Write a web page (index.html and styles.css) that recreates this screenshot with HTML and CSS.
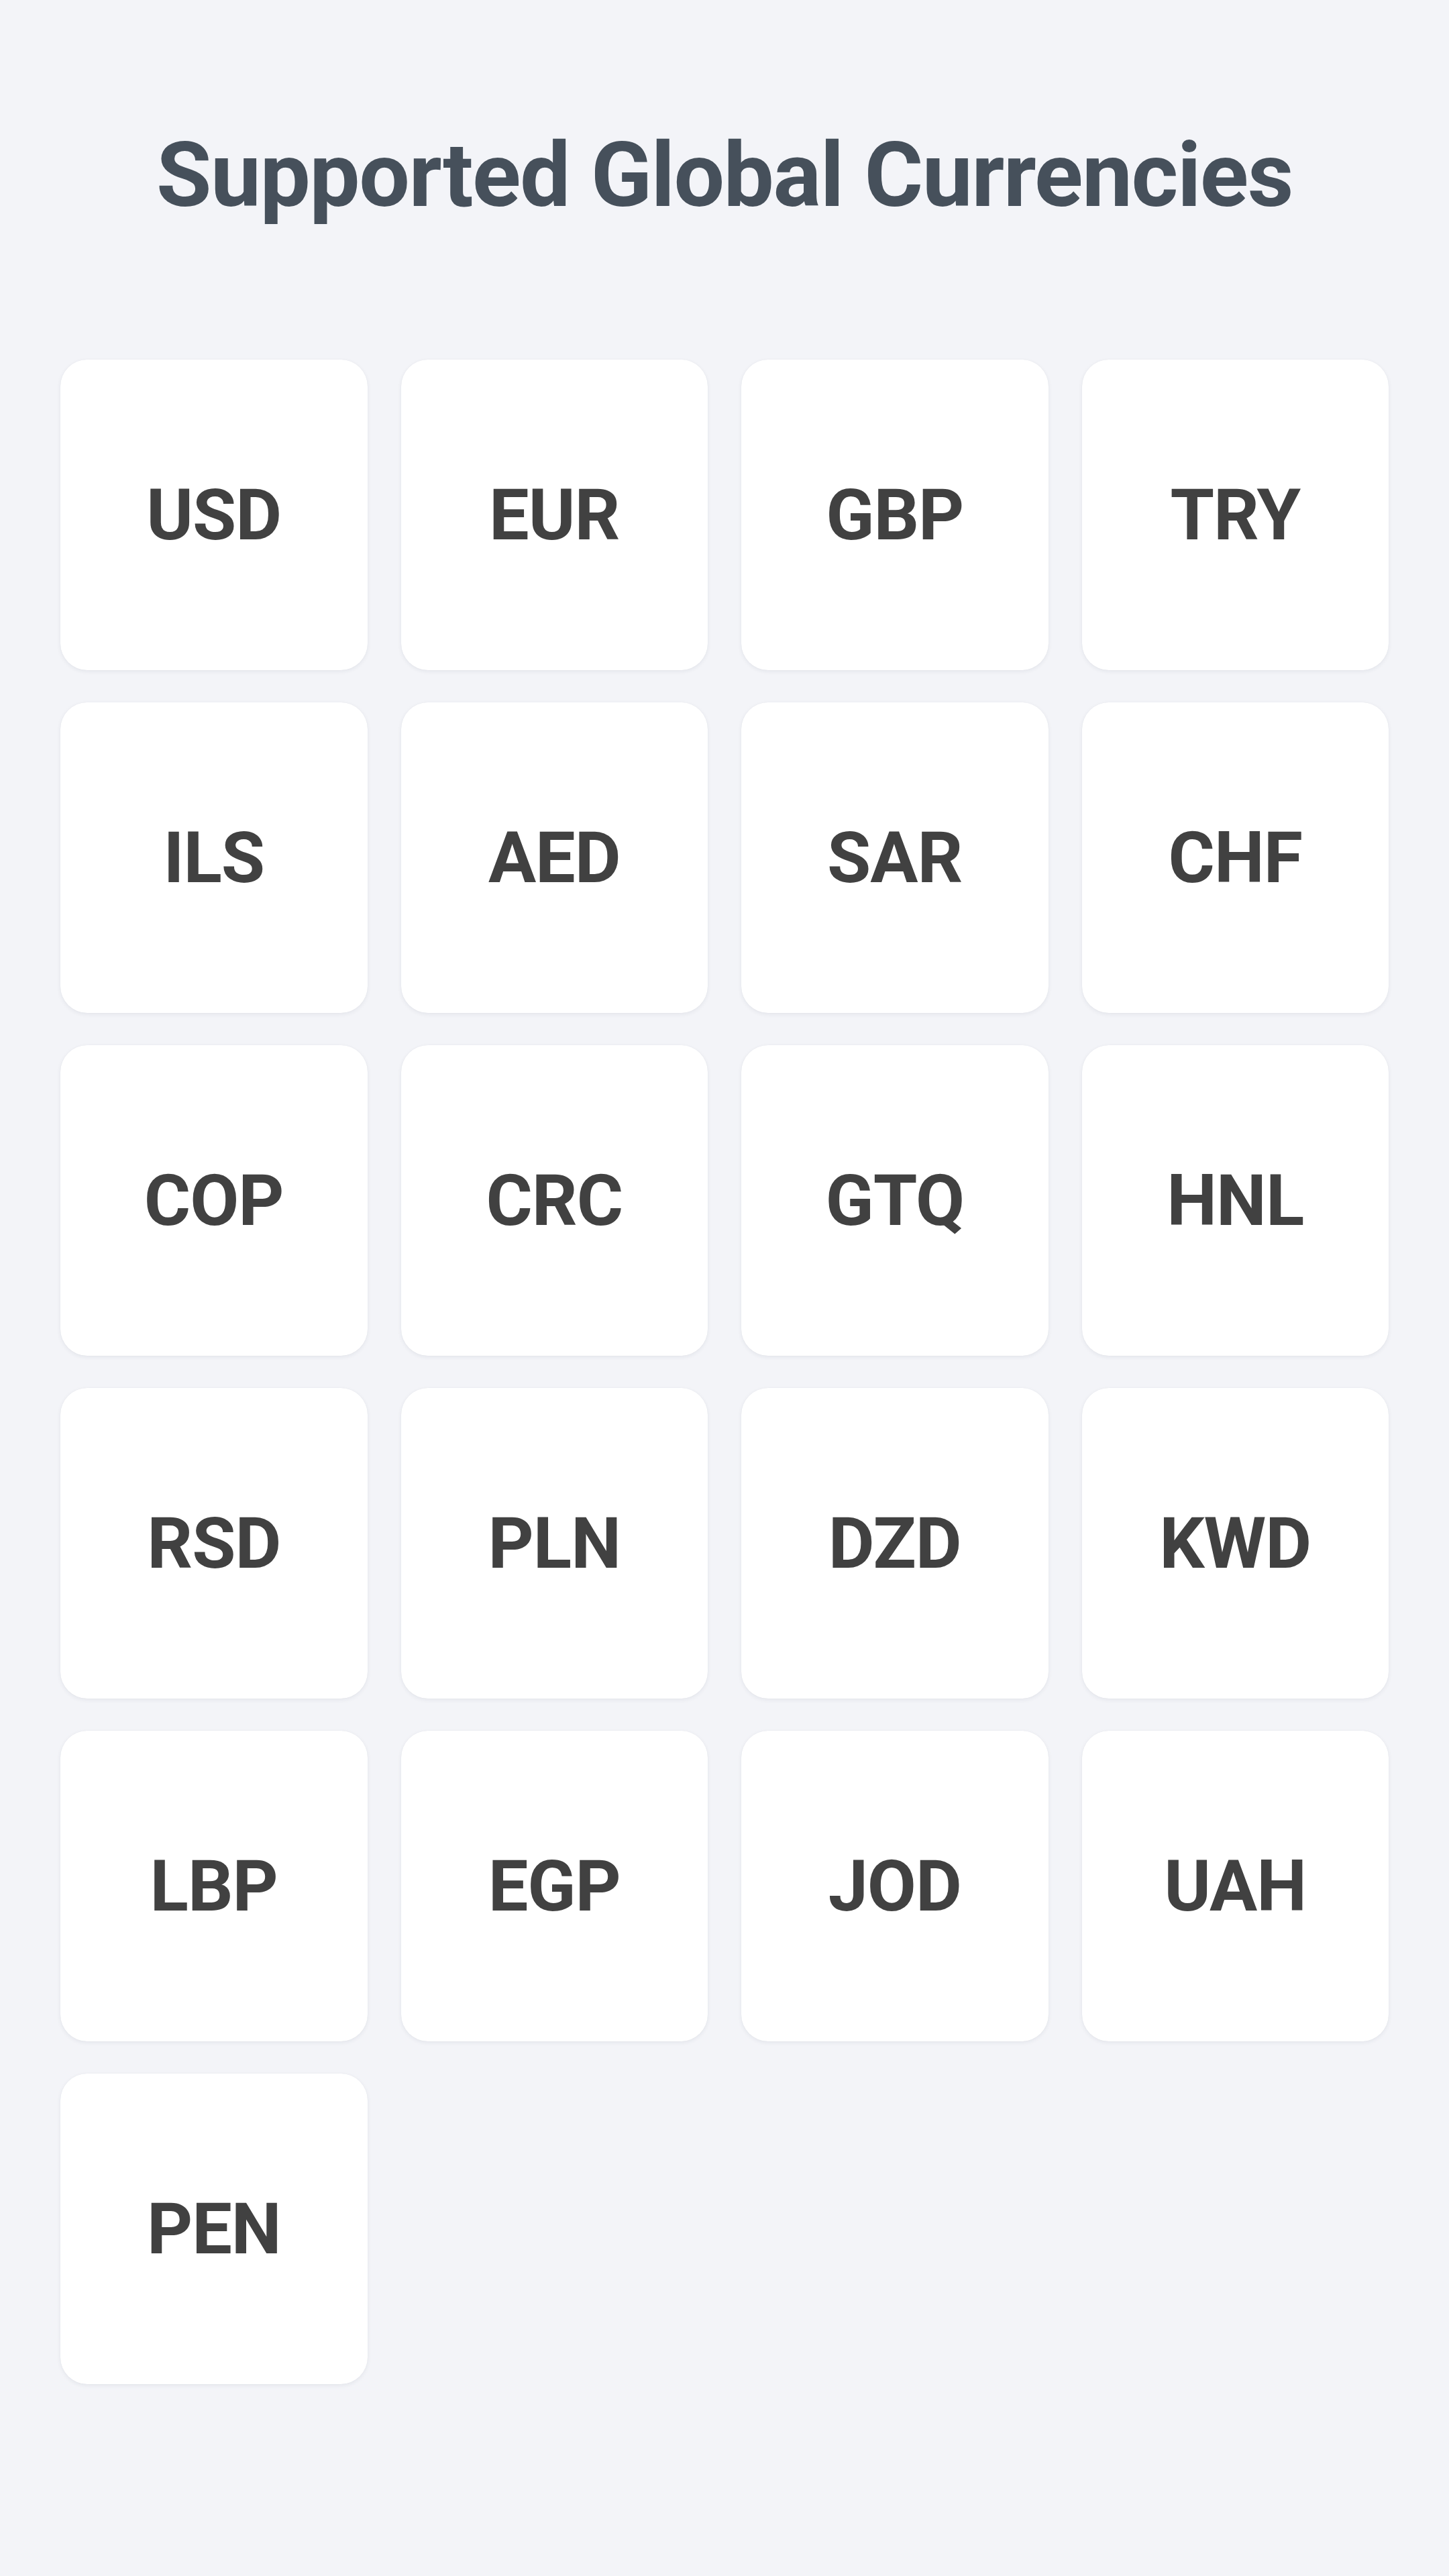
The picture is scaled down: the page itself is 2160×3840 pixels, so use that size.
FILE: index.html
```html
<!DOCTYPE html>
<html lang="en">
<head>
<meta charset="utf-8">
<title>Supported Global Currencies</title>
<link rel="stylesheet" href="styles.css">
</head>
<body>
<main class="page">
  <h1 class="title">Supported Global Currencies</h1>
  <div class="grid">
    <div class="card">USD</div>
    <div class="card">EUR</div>
    <div class="card">GBP</div>
    <div class="card">TRY</div>
    <div class="card">ILS</div>
    <div class="card">AED</div>
    <div class="card">SAR</div>
    <div class="card">CHF</div>
    <div class="card">COP</div>
    <div class="card">CRC</div>
    <div class="card">GTQ</div>
    <div class="card">HNL</div>
    <div class="card">RSD</div>
    <div class="card">PLN</div>
    <div class="card">DZD</div>
    <div class="card">KWD</div>
    <div class="card">LBP</div>
    <div class="card">EGP</div>
    <div class="card">JOD</div>
    <div class="card">UAH</div>
    <div class="card">PEN</div>
  </div>
</main>
</body>
</html>
```

FILE: styles.css
```css
html, body {
  margin: 0;
  padding: 0;
}
body {
  background: #f3f4f8;
  font-family: Roboto, "Liberation Sans", Arial, sans-serif;
  min-height: 3840px;
}
.page {
  padding: 181px 90px 0 90px;
}
.title {
  margin: 0;
  font-size: 134px;
  line-height: 162px;
  font-weight: 700;
  color: #46505b;
  text-align: center;
  letter-spacing: -1.5px;
}
.grid {
  margin-top: 193px;
  display: grid;
  grid-template-columns: repeat(4, 1fr);
  column-gap: 50px;
  row-gap: 48px;
}
.card {
  height: 463px;
  background: #ffffff;
  border-radius: 40px;
  box-shadow: 0 2px 6px rgba(30, 40, 70, 0.07), 0 0 1px rgba(30, 40, 70, 0.08);
  display: flex;
  align-items: center;
  justify-content: center;
  font-size: 106px;
  font-weight: 700;
  color: #414141;
  letter-spacing: -1px;
}
```
